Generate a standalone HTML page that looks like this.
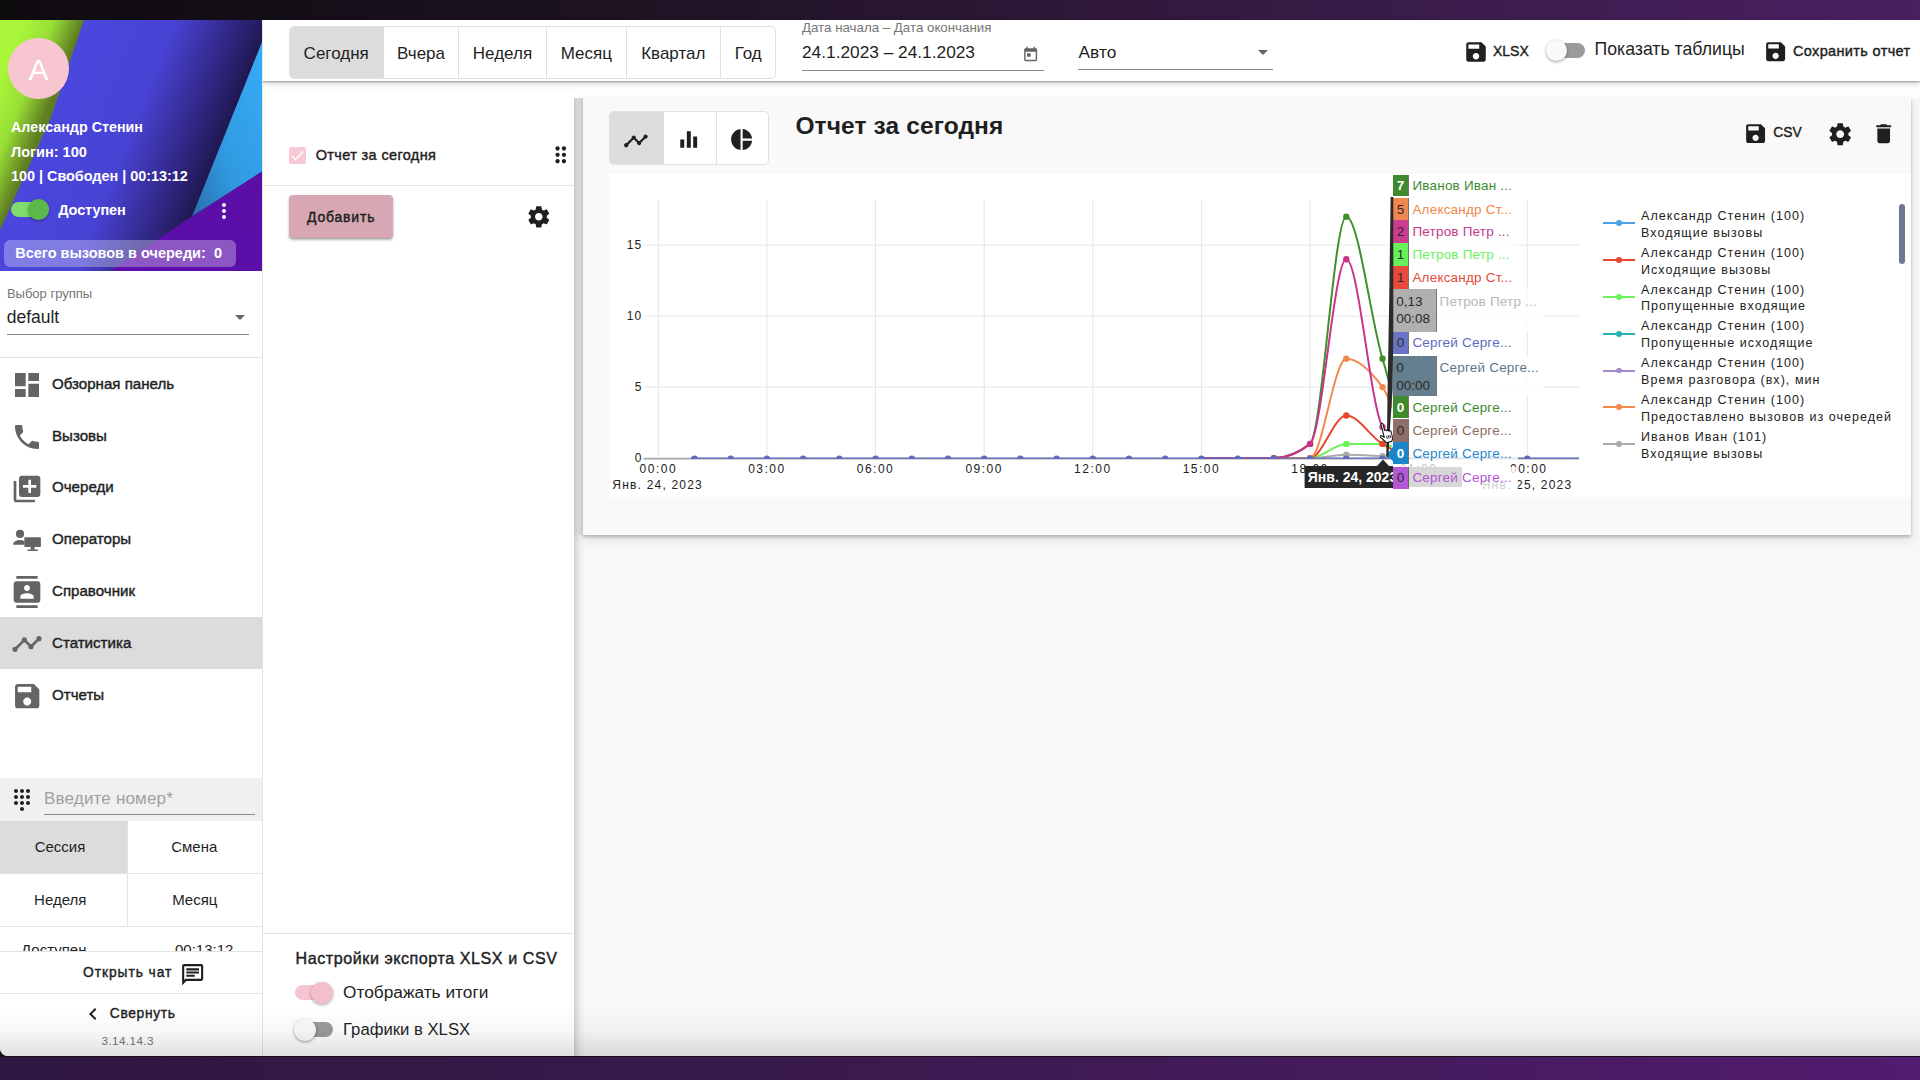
<!DOCTYPE html>
<html><head><meta charset="utf-8">
<style>
*{margin:0;padding:0;box-sizing:border-box}
html,body{width:1920px;height:1080px;overflow:hidden}
body{position:relative;font-family:"Liberation Sans",sans-serif;color:#1f1f1f;background:#1a1020}
.a{position:absolute}
.t{position:absolute;line-height:1;white-space:nowrap}
.b{font-weight:700}
.m{font-weight:400;-webkit-text-stroke:0.42px currentColor}
svg.i{position:absolute;display:block;overflow:visible}
.g{fill:#646464}
.k{fill:#1f1f1f}
.seg{position:absolute;top:0;height:51px;font-size:17px;line-height:51px;text-align:center;color:#1f1f1f}
</style></head><body>
<div class="a" style="left:0;top:0;width:1920px;height:20px;background:linear-gradient(90deg,#0e0b0f 0%,#1c1220 30%,#2e1838 55%,#3e1d50 80%,#4a1f62 100%)"></div>
<div class="a" style="left:0;top:1056px;width:1920px;height:24px;background:linear-gradient(90deg,#2e1740 0%,#391a4c 40%,#461b5e 75%,#521c70 100%)"></div>
<!-- window -->
<div class="a" style="left:0;top:20px;width:1920px;height:1036px;background:#f8f8f8;border-radius:0 0 0 8px;overflow:hidden">
</div>
<!-- MAIN -->
<!--MAINSTART-->
<div class="a" style="left:574px;top:80px;width:1346px;height:18px;background:#fff"></div>
<div class="a" style="left:574px;top:98px;width:11px;height:958px;background:linear-gradient(90deg,rgba(0,0,0,.16),rgba(0,0,0,.05) 50%,rgba(0,0,0,0))"></div>
<div class="a" style="left:583px;top:98px;width:1328px;height:437px;background:#f9f9f9;box-shadow:0 2px 3px rgba(0,0,0,.24),0 5px 12px rgba(0,0,0,.1)"></div>
<div class="a" style="left:574px;top:98px;width:9px;height:437px;background:linear-gradient(90deg,#c9c9c9,#d8d8d8 40%,#d6d6d6 70%,#c6c6c6)"></div>
<div class="a" style="left:609px;top:174px;width:1302px;height:323px;background:#fff"></div>
<div class="a" style="left:609px;top:111px;width:160px;height:54px;border:1px solid #e0e0e0;border-radius:5px;background:#fff;overflow:hidden"><div class="a" style="left:0;top:0;width:53px;height:52px;background:#dcdcdc"></div><div class="a" style="left:53px;top:0;width:1px;height:52px;background:#e0e0e0"></div><div class="a" style="left:105.5px;top:0;width:1px;height:52px;background:#e0e0e0"></div></div>
<svg class="i" style="left:622.9px;top:127.5px" width="25.8" height="25.8" viewBox="0 0 24 24"><path class="k" d="M23 8c0 1.1-.9 2-2 2-.18 0-.35-.02-.51-.07l-3.56 3.55c.05.16.07.34.07.52 0 1.1-.9 2-2 2s-2-.9-2-2c0-.18.02-.36.07-.52l-2.55-2.55c-.16.05-.34.07-.52.07s-.36-.02-.52-.07l-4.55 4.56c.05.16.07.33.07.51 0 1.1-.9 2-2 2s-2-.9-2-2 .9-2 2-2c.18 0 .35.02.51.07l4.56-4.55C8.02 9.36 8 9.18 8 9c0-1.1.9-2 2-2s2 .9 2 2c0 .18-.02.36-.07.52l2.55 2.55c.16-.05.34-.07.52-.07s.36.02.52.07l3.55-3.56C19.02 8.35 19 8.18 19 8c0-1.1.9-2 2-2s2 .9 2 2z"/></svg>
<svg class="i" style="left:676.1px;top:127.3px" width="25" height="25" viewBox="0 0 24 24"><path class="k" d="M10.4 20h3.8V4h-3.8v16zm-6.3 0h3.8v-8H4.1v8zM16.5 9v11h3.8V9h-3.8z"/></svg>
<svg class="i" style="left:729.2px;top:127.1px" width="25.2" height="25.2" viewBox="0 0 24 24"><path class="k" d="M11 2v20c-5.07-.5-9-4.79-9-10s3.93-9.5 9-10zm2.03 0v8.99H22c-.47-4.74-4.24-8.52-8.97-8.99zm0 11.01V22c4.74-.47 8.5-4.25 8.97-8.99h-8.97z"/></svg>
<div class="t b" style="left:795.4px;top:114.3px;font-size:24.5px;letter-spacing:0.12px">Отчет за сегодня</div>
<svg class="i" style="left:1743.25px;top:121.25px" width="25.2" height="25.2" viewBox="0 0 24 24"><path class="k" d="M17 3H5c-1.11 0-2 .9-2 2v14c0 1.1.89 2 2 2h14c1.1 0 2-.9 2-2V7l-4-4zm-5 16c-1.66 0-3-1.34-3-3s1.34-3 3-3 3 1.34 3 3-1.34 3-3 3zm3-10H5V5h10v4z"/></svg>
<div class="t m" style="left:1773.3px;top:126.2px;font-size:13.8px">CSV</div>
<svg class="i" style="left:1827px;top:121px" width="26.4" height="26.4" viewBox="0 0 24 24"><path class="k" d="M19.43 12.98c.04-.32.07-.64.07-.98s-.03-.66-.07-.98l2.11-1.65c.19-.15.24-.42.12-.64l-2-3.46c-.12-.22-.39-.3-.61-.22l-2.49 1c-.52-.4-1.08-.73-1.69-.98l-.38-2.65C14.46 2.18 14.25 2 14 2h-4c-.25 0-.46.18-.49.42l-.38 2.65c-.61.25-1.17.59-1.69.98l-2.49-1c-.23-.09-.49 0-.61.22l-2 3.46c-.13.22-.07.49.12.64l2.11 1.65c-.04.32-.07.65-.07.98s.03.66.07.98l-2.11 1.65c-.19.15-.24.42-.12.64l2 3.46c.12.22.39.3.61.22l2.49-1c.52.4 1.08.73 1.69.98l.38 2.65c.03.24.24.42.49.42h4c.25 0 .46-.18.49-.42l.38-2.65c.61-.25 1.17-.59 1.69-.98l2.49 1c.23.09.49 0 .61-.22l2-3.46c.12-.22.07-.49-.12-.64l-2.11-1.65zM12 15.5c-1.93 0-3.5-1.57-3.5-3.5s1.57-3.5 3.5-3.5 3.5 1.57 3.5 3.5-1.57 3.5-3.5 3.5z"/></svg>
<svg class="i" style="left:1870.8px;top:121.2px" width="25.4" height="25.4" viewBox="0 0 24 24"><path class="k" d="M6 19c0 1.1.9 2 2 2h8c1.1 0 2-.9 2-2V7H6v12zM19 4h-3.5l-1-1h-5l-1 1H5v2h14V4z"/></svg>
<svg class="a" style="left:583px;top:98px" width="1328" height="437" viewBox="583 98 1328 437">
<defs><clipPath id="pc"><rect x="643" y="190" width="936" height="268.8"/></clipPath><clipPath id="pc2"><rect x="643" y="190" width="749" height="268.8"/></clipPath></defs>
<g stroke="#e6e6e6" stroke-width="1"><line x1="658.3" y1="200" x2="658.3" y2="458.6"/><line x1="766.9" y1="200" x2="766.9" y2="458.6"/><line x1="875.5" y1="200" x2="875.5" y2="458.6"/><line x1="984.2" y1="200" x2="984.2" y2="458.6"/><line x1="1092.8" y1="200" x2="1092.8" y2="458.6"/><line x1="1201.4" y1="200" x2="1201.4" y2="458.6"/><line x1="1310.0" y1="200" x2="1310.0" y2="458.6"/><line x1="1418.6" y1="200" x2="1418.6" y2="458.6"/><line x1="1527.3" y1="200" x2="1527.3" y2="458.6"/><line x1="643.5" y1="387.1" x2="1579" y2="387.1"/><line x1="643.5" y1="316.1" x2="1579" y2="316.1"/><line x1="643.5" y1="245.1" x2="1579" y2="245.1"/></g>
<line x1="643.5" y1="458.6" x2="1579" y2="458.6" stroke="#a6a6a6" stroke-width="1.6"/>
<g clip-path="url(#pc2)"><path d="M1237.7,458.1 C1249.7,458.1 1261.8,458.1 1273.9,458.1 C1285.9,458.1 1298.0,458.1 1310.1,458.1 C1322.1,458.1 1334.2,454.8 1346.3,454.8 C1358.4,454.8 1370.4,455.7 1382.5,456.3 C1394.6,456.8 1406.6,458.1 1418.7,458.1 C1430.8,458.1 1442.9,458.1 1454.9,458.1" fill="none" stroke="#aaaaaa" stroke-width="2"/><circle cx="1310.1" cy="458.1" r="3.2" fill="#aaaaaa"/><circle cx="1346.3" cy="454.8" r="3.2" fill="#aaaaaa"/><circle cx="1382.5" cy="456.3" r="3.2" fill="#aaaaaa"/><circle cx="1418.7" cy="458.1" r="3.2" fill="#aaaaaa"/><path d="M1237.7,458.1 C1249.7,458.1 1261.8,458.1 1273.9,458.1 C1285.9,458.1 1298.0,458.1 1310.1,458.1 C1322.1,458.1 1334.2,443.9 1346.3,443.9 C1358.4,443.9 1370.4,443.9 1382.5,443.9 C1394.6,443.9 1406.6,458.1 1418.7,458.1 C1430.8,458.1 1442.9,458.1 1454.9,458.1" fill="none" stroke="#6cf35a" stroke-width="2"/><circle cx="1310.1" cy="458.1" r="3.2" fill="#6cf35a"/><circle cx="1346.3" cy="443.9" r="3.2" fill="#6cf35a"/><circle cx="1382.5" cy="443.9" r="3.2" fill="#6cf35a"/><circle cx="1418.7" cy="458.1" r="3.2" fill="#6cf35a"/><path d="M1237.7,458.1 C1249.7,458.1 1261.8,458.1 1273.9,458.1 C1285.9,458.1 1298.0,458.1 1310.1,458.1 C1322.1,458.1 1334.2,415.5 1346.3,415.5 C1358.4,415.5 1370.4,436.8 1382.5,443.9 C1394.6,451.0 1406.6,458.1 1418.7,458.1 C1430.8,458.1 1442.9,458.1 1454.9,458.1" fill="none" stroke="#e8472e" stroke-width="2"/><circle cx="1310.1" cy="458.1" r="3.2" fill="#e8472e"/><circle cx="1346.3" cy="415.5" r="3.2" fill="#e8472e"/><circle cx="1382.5" cy="443.9" r="3.2" fill="#e8472e"/><circle cx="1418.7" cy="458.1" r="3.2" fill="#e8472e"/><path d="M1237.7,458.1 C1249.7,458.1 1261.8,458.1 1273.9,458.1 C1285.9,458.1 1298.0,458.1 1310.1,458.1 C1322.1,458.1 1334.2,358.7 1346.3,358.7 C1358.4,358.7 1370.4,370.5 1382.5,387.1 C1394.6,403.7 1406.6,458.1 1418.7,458.1 C1430.8,458.1 1442.9,458.1 1454.9,458.1" fill="none" stroke="#f28a4e" stroke-width="2"/><circle cx="1310.1" cy="458.1" r="3.2" fill="#f28a4e"/><circle cx="1346.3" cy="358.7" r="3.2" fill="#f28a4e"/><circle cx="1382.5" cy="387.1" r="3.2" fill="#f28a4e"/><circle cx="1418.7" cy="458.1" r="3.2" fill="#f28a4e"/><path d="M1201.4,458.1 C1213.5,458.1 1225.6,458.1 1237.7,458.1 C1249.7,458.1 1261.8,458.1 1273.9,458.1 C1285.9,458.1 1298.0,453.4 1310.1,443.9 C1322.1,434.4 1334.2,216.7 1346.3,216.7 C1358.4,216.7 1370.4,318.5 1382.5,358.7 C1394.6,398.9 1406.6,458.1 1418.7,458.1 C1430.8,458.1 1442.9,458.1 1454.9,458.1" fill="none" stroke="#3f8f2a" stroke-width="2"/><circle cx="1273.9" cy="458.1" r="3.2" fill="#3f8f2a"/><circle cx="1310.1" cy="443.9" r="3.2" fill="#3f8f2a"/><circle cx="1346.3" cy="216.7" r="3.2" fill="#3f8f2a"/><circle cx="1382.5" cy="358.7" r="3.2" fill="#3f8f2a"/><circle cx="1418.7" cy="458.1" r="3.2" fill="#3f8f2a"/><path d="M1201.4,458.1 C1213.5,458.1 1225.6,458.1 1237.7,458.1 C1249.7,458.1 1261.8,458.1 1273.9,458.1 C1285.9,458.1 1298.0,453.4 1310.1,443.9 C1322.1,434.4 1334.2,259.3 1346.3,259.3 C1358.4,259.3 1370.4,406.0 1382.5,426.9 C1394.6,447.7 1406.6,458.1 1418.7,458.1 C1430.8,458.1 1442.9,458.1 1454.9,458.1" fill="none" stroke="#c9348a" stroke-width="2"/><circle cx="1273.9" cy="458.1" r="3.2" fill="#c9348a"/><circle cx="1310.1" cy="443.9" r="3.2" fill="#c9348a"/><circle cx="1346.3" cy="259.3" r="3.2" fill="#c9348a"/><circle cx="1382.5" cy="426.9" r="3.2" fill="#c9348a"/><circle cx="1418.7" cy="458.1" r="3.2" fill="#c9348a"/></g>
<g clip-path="url(#pc)"><line x1="691" y1="458.6" x2="1579" y2="458.6" stroke="#5c6bc0" stroke-width="2"/><circle cx="694.5" cy="458.6" r="3.2" fill="#5c6bc0"/><circle cx="730.7" cy="458.6" r="3.2" fill="#5c6bc0"/><circle cx="766.9" cy="458.6" r="3.2" fill="#5c6bc0"/><circle cx="803.1" cy="458.6" r="3.2" fill="#5c6bc0"/><circle cx="839.3" cy="458.6" r="3.2" fill="#5c6bc0"/><circle cx="875.6" cy="458.6" r="3.2" fill="#5c6bc0"/><circle cx="911.8" cy="458.6" r="3.2" fill="#5c6bc0"/><circle cx="948.0" cy="458.6" r="3.2" fill="#5c6bc0"/><circle cx="984.2" cy="458.6" r="3.2" fill="#5c6bc0"/><circle cx="1020.4" cy="458.6" r="3.2" fill="#5c6bc0"/><circle cx="1056.6" cy="458.6" r="3.2" fill="#5c6bc0"/><circle cx="1092.8" cy="458.6" r="3.2" fill="#5c6bc0"/><circle cx="1129.0" cy="458.6" r="3.2" fill="#5c6bc0"/><circle cx="1165.2" cy="458.6" r="3.2" fill="#5c6bc0"/><circle cx="1201.4" cy="458.6" r="3.2" fill="#5c6bc0"/><circle cx="1237.7" cy="458.6" r="3.2" fill="#5c6bc0"/><circle cx="1273.9" cy="458.6" r="3.2" fill="#5c6bc0"/><circle cx="1310.1" cy="458.6" r="3.2" fill="#5c6bc0"/><circle cx="1346.3" cy="458.6" r="3.2" fill="#5c6bc0"/><circle cx="1382.5" cy="458.6" r="3.2" fill="#5c6bc0"/><circle cx="1418.7" cy="458.6" r="3.2" fill="#5c6bc0"/><circle cx="1454.9" cy="458.6" r="3.2" fill="#5c6bc0"/><circle cx="1491.1" cy="458.6" r="3.2" fill="#5c6bc0"/><circle cx="1527.3" cy="458.6" r="3.2" fill="#5c6bc0"/></g>
</svg>
<div class="t" style="left:560px;width:82.5px;text-align:right;top:238.8px;font-size:12px;letter-spacing:1.2px;color:#222">15</div>
<div class="t" style="left:560px;width:82.5px;text-align:right;top:309.8px;font-size:12px;letter-spacing:1.2px;color:#222">10</div>
<div class="t" style="left:560px;width:82.5px;text-align:right;top:380.8px;font-size:12px;letter-spacing:1.2px;color:#222">5</div>
<div class="t" style="left:560px;width:82.5px;text-align:right;top:451.8px;font-size:12px;letter-spacing:1.2px;color:#222">0</div>
<div class="t" style="left:618.3px;width:80px;text-align:center;top:462.5px;font-size:12px;letter-spacing:1.2px;color:#222;letter-spacing:1.5px">00:00</div>
<div class="t" style="left:726.9px;width:80px;text-align:center;top:462.5px;font-size:12px;letter-spacing:1.2px;color:#222;letter-spacing:1.5px">03:00</div>
<div class="t" style="left:835.5px;width:80px;text-align:center;top:462.5px;font-size:12px;letter-spacing:1.2px;color:#222;letter-spacing:1.5px">06:00</div>
<div class="t" style="left:944.2px;width:80px;text-align:center;top:462.5px;font-size:12px;letter-spacing:1.2px;color:#222;letter-spacing:1.5px">09:00</div>
<div class="t" style="left:1052.8px;width:80px;text-align:center;top:462.5px;font-size:12px;letter-spacing:1.2px;color:#222;letter-spacing:1.5px">12:00</div>
<div class="t" style="left:1161.4px;width:80px;text-align:center;top:462.5px;font-size:12px;letter-spacing:1.2px;color:#222;letter-spacing:1.5px">15:00</div>
<div class="t" style="left:1270.0px;width:80px;text-align:center;top:462.5px;font-size:12px;letter-spacing:1.2px;color:#222;letter-spacing:1.5px">18:00</div>
<div class="t" style="left:1378.6px;width:80px;text-align:center;top:462.5px;font-size:12px;letter-spacing:1.2px;color:#222;letter-spacing:1.5px;color:#c8c8c8">21:00</div>
<div class="t" style="left:612.3px;top:479.3px;font-size:12px;letter-spacing:1.2px;color:#222">Янв. 24, 2023</div>
<div class="t" style="left:1510px;top:462.5px;font-size:12px;letter-spacing:1.2px;color:#222;letter-spacing:1.5px">00:00</div>
<div class="t" style="left:1481.7px;top:479.3px;font-size:12px;letter-spacing:1.2px;color:#222">Янв. 25, 2023</div>
<div class="a" style="left:1602.8px;top:222.3px;width:32.4px;height:2px;background:#4aa3e8"></div>
<div class="a" style="left:1616.2px;top:220.4px;width:5.8px;height:5.8px;border-radius:50%;background:#4aa3e8"></div>
<div class="t" style="left:1641px;top:209.9px;font-size:12.5px;letter-spacing:1.05px;color:#222">Александр Стенин (100)</div>
<div class="t" style="left:1641px;top:226.8px;font-size:12.5px;letter-spacing:1.05px;color:#222">Входящие вызовы</div>
<div class="a" style="left:1602.8px;top:259.1px;width:32.4px;height:2px;background:#e8472e"></div>
<div class="a" style="left:1616.2px;top:257.2px;width:5.8px;height:5.8px;border-radius:50%;background:#e8472e"></div>
<div class="t" style="left:1641px;top:246.7px;font-size:12.5px;letter-spacing:1.05px;color:#222">Александр Стенин (100)</div>
<div class="t" style="left:1641px;top:263.6px;font-size:12.5px;letter-spacing:1.05px;color:#222">Исходящие вызовы</div>
<div class="a" style="left:1602.8px;top:295.9px;width:32.4px;height:2px;background:#6cf35a"></div>
<div class="a" style="left:1616.2px;top:294.0px;width:5.8px;height:5.8px;border-radius:50%;background:#6cf35a"></div>
<div class="t" style="left:1641px;top:283.5px;font-size:12.5px;letter-spacing:1.05px;color:#222">Александр Стенин (100)</div>
<div class="t" style="left:1641px;top:300.4px;font-size:12.5px;letter-spacing:1.05px;color:#222">Пропущенные входящие</div>
<div class="a" style="left:1602.8px;top:332.7px;width:32.4px;height:2px;background:#26b0b0"></div>
<div class="a" style="left:1616.2px;top:330.8px;width:5.8px;height:5.8px;border-radius:50%;background:#26b0b0"></div>
<div class="t" style="left:1641px;top:320.3px;font-size:12.5px;letter-spacing:1.05px;color:#222">Александр Стенин (100)</div>
<div class="t" style="left:1641px;top:337.2px;font-size:12.5px;letter-spacing:1.05px;color:#222">Пропущенные исходящие</div>
<div class="a" style="left:1602.8px;top:369.5px;width:32.4px;height:2px;background:#a48ccc"></div>
<div class="a" style="left:1616.2px;top:367.6px;width:5.8px;height:5.8px;border-radius:50%;background:#a48ccc"></div>
<div class="t" style="left:1641px;top:357.1px;font-size:12.5px;letter-spacing:1.05px;color:#222">Александр Стенин (100)</div>
<div class="t" style="left:1641px;top:374.0px;font-size:12.5px;letter-spacing:1.05px;color:#222">Время разговора (вх), мин</div>
<div class="a" style="left:1602.8px;top:406.3px;width:32.4px;height:2px;background:#f28a4e"></div>
<div class="a" style="left:1616.2px;top:404.4px;width:5.8px;height:5.8px;border-radius:50%;background:#f28a4e"></div>
<div class="t" style="left:1641px;top:393.9px;font-size:12.5px;letter-spacing:1.05px;color:#222">Александр Стенин (100)</div>
<div class="t" style="left:1641px;top:410.8px;font-size:12.5px;letter-spacing:1.05px;color:#222">Предоставлено вызовов из очередей</div>
<div class="a" style="left:1602.8px;top:443.1px;width:32.4px;height:2px;background:#aaaaaa"></div>
<div class="a" style="left:1616.2px;top:441.2px;width:5.8px;height:5.8px;border-radius:50%;background:#aaaaaa"></div>
<div class="t" style="left:1641px;top:430.7px;font-size:12.5px;letter-spacing:1.05px;color:#222">Иванов Иван (101)</div>
<div class="t" style="left:1641px;top:447.6px;font-size:12.5px;letter-spacing:1.05px;color:#222">Входящие вызовы</div>
<div class="a" style="left:1899px;top:204.4px;width:6.2px;height:59.3px;border-radius:3px;background:#6e7890"></div>
<div class="a" style="left:1393px;top:175px;width:125px;height:20.5px;background:rgba(255,255,255,.78)"></div>
<div class="a" style="left:1393px;top:198px;width:125px;height:22px;background:rgba(255,255,255,.78)"></div>
<div class="a" style="left:1393px;top:220px;width:125px;height:23px;background:rgba(255,255,255,.78)"></div>
<div class="a" style="left:1393px;top:243px;width:125px;height:23px;background:rgba(255,255,255,.78)"></div>
<div class="a" style="left:1393px;top:266px;width:125px;height:23px;background:rgba(255,255,255,.78)"></div>
<div class="a" style="left:1393px;top:289px;width:151px;height:42.5px;background:rgba(255,255,255,.78)"></div>
<div class="a" style="left:1393px;top:331.5px;width:125px;height:22.7px;background:rgba(255,255,255,.78)"></div>
<div class="a" style="left:1393px;top:355.8px;width:151px;height:40.5px;background:rgba(255,255,255,.78)"></div>
<div class="a" style="left:1393px;top:396.3px;width:125px;height:21.8px;background:rgba(255,255,255,.78)"></div>
<div class="a" style="left:1393px;top:418.5px;width:125px;height:23.9px;background:rgba(255,255,255,.78)"></div>
<div class="a" style="left:1393px;top:442.4px;width:125px;height:21.9px;background:rgba(255,255,255,.78)"></div>
<div class="a" style="left:1393px;top:466.7px;width:125px;height:21.9px;background:rgba(255,255,255,.78)"></div>
<div class="a" style="left:1408px;top:466.7px;width:54px;height:20.5px;background:rgba(200,200,200,.72)"></div>
<div class="a" style="left:1393px;top:175px;width:15px;height:20.5px;background:#3f8a2c;box-shadow:1px 0 0 rgba(0,0,0,.55)"></div>
<div class="t" style="left:1393px;width:15px;text-align:center;top:178.7px;font-size:13.5px;font-weight:700;color:#fff">7</div>
<div class="t" style="left:1412.4px;top:178.7px;font-size:13.5px;letter-spacing:0.2px;color:#3d8a2e">Иванов Иван ...</div>
<div class="a" style="left:1393px;top:198px;width:15px;height:22px;background:#f0884f;box-shadow:1px 0 0 rgba(0,0,0,.55)"></div>
<div class="t" style="left:1393px;width:15px;text-align:center;top:202.5px;font-size:13.5px;color:#2a2a2a">5</div>
<div class="t" style="left:1412.4px;top:202.5px;font-size:13.5px;letter-spacing:0.2px;color:#f0864a">Александр Ст...</div>
<div class="a" style="left:1393px;top:220px;width:15px;height:23px;background:#cc3d8f;box-shadow:1px 0 0 rgba(0,0,0,.55)"></div>
<div class="t" style="left:1393px;width:15px;text-align:center;top:225.0px;font-size:13.5px;color:#2a2a2a">2</div>
<div class="t" style="left:1412.4px;top:225.0px;font-size:13.5px;letter-spacing:0.2px;color:#c5398b">Петров Петр ...</div>
<div class="a" style="left:1393px;top:243px;width:15px;height:23px;background:#66f256;box-shadow:1px 0 0 rgba(0,0,0,.55)"></div>
<div class="t" style="left:1393px;width:15px;text-align:center;top:248.0px;font-size:13.5px;color:#2a2a2a">1</div>
<div class="t" style="left:1412.4px;top:248.0px;font-size:13.5px;letter-spacing:0.2px;color:#6cf25c">Петров Петр ...</div>
<div class="a" style="left:1393px;top:266px;width:15px;height:23px;background:#e84b3c;box-shadow:1px 0 0 rgba(0,0,0,.55)"></div>
<div class="t" style="left:1393px;width:15px;text-align:center;top:271.0px;font-size:13.5px;color:#2a2a2a">1</div>
<div class="t" style="left:1412.4px;top:271.0px;font-size:13.5px;letter-spacing:0.2px;color:#e44a36">Александр Ст...</div>
<div class="a" style="left:1393px;top:289px;width:43px;height:42.5px;background:#b0b0b0;box-shadow:1px 0 0 rgba(0,0,0,.55)"></div>
<div class="t" style="left:1396.3px;top:294.5px;font-size:13.5px;color:#2a2a2a">0,13</div>
<div class="t" style="left:1396.3px;top:312.1px;font-size:13.5px;color:#2a2a2a">00:08</div>
<div class="t" style="left:1439.6px;top:294.5px;font-size:13.5px;letter-spacing:0.2px;color:#b8b8b8">Петров Петр ...</div>
<div class="a" style="left:1393px;top:331.5px;width:15px;height:22.7px;background:#6b74c4;box-shadow:1px 0 0 rgba(0,0,0,.55)"></div>
<div class="t" style="left:1393px;width:15px;text-align:center;top:336.3px;font-size:13.5px;color:#2a2a2a">0</div>
<div class="t" style="left:1412.4px;top:336.3px;font-size:13.5px;letter-spacing:0.2px;color:#5e6ac0">Сергей Серге...</div>
<div class="a" style="left:1393px;top:355.8px;width:43px;height:40.5px;background:#667f8e;box-shadow:1px 0 0 rgba(0,0,0,.55)"></div>
<div class="t" style="left:1396.3px;top:361.3px;font-size:13.5px;color:#2a2a2a">0</div>
<div class="t" style="left:1396.3px;top:378.9px;font-size:13.5px;color:#2a2a2a">00:00</div>
<div class="t" style="left:1439.6px;top:361.3px;font-size:13.5px;letter-spacing:0.2px;color:#5f7686">Сергей Серге...</div>
<div class="a" style="left:1393px;top:396.3px;width:15px;height:21.8px;background:#3f8a2c;box-shadow:1px 0 0 rgba(0,0,0,.55)"></div>
<div class="t" style="left:1393px;width:15px;text-align:center;top:400.7px;font-size:13.5px;font-weight:700;color:#fff">0</div>
<div class="t" style="left:1412.4px;top:400.7px;font-size:13.5px;letter-spacing:0.2px;color:#3d8a2e">Сергей Серге...</div>
<div class="a" style="left:1393px;top:418.5px;width:15px;height:23.9px;background:#8e7068;box-shadow:1px 0 0 rgba(0,0,0,.55)"></div>
<div class="t" style="left:1393px;width:15px;text-align:center;top:423.9px;font-size:13.5px;color:#2a2a2a">0</div>
<div class="t" style="left:1412.4px;top:423.9px;font-size:13.5px;letter-spacing:0.2px;color:#8d6e63">Сергей Серге...</div>
<div class="a" style="left:1393px;top:442.4px;width:15px;height:21.9px;background:#1a86c7;box-shadow:1px 0 0 rgba(0,0,0,.55)"></div>
<div class="t" style="left:1393px;width:15px;text-align:center;top:446.8px;font-size:13.5px;font-weight:700;color:#fff">0</div>
<div class="t" style="left:1412.4px;top:446.8px;font-size:13.5px;letter-spacing:0.2px;color:#1e88cc">Сергей Серге...</div>
<div class="a" style="left:1393px;top:466.7px;width:15px;height:21.9px;background:#b357d4;box-shadow:1px 0 0 rgba(0,0,0,.55)"></div>
<div class="t" style="left:1393px;width:15px;text-align:center;top:471.1px;font-size:13.5px;color:#2a2a2a">0</div>
<div class="t" style="left:1412.4px;top:471.1px;font-size:13.5px;letter-spacing:0.2px;color:#b455d6">Сергей Серге...</div>
<svg class="a" style="left:1380px;top:440px" width="20" height="30" viewBox="1380 440 20 30"><polygon points="1393.5,446 1386.8,454.6 1393.5,462" fill="#1a86c7"/></svg>
<svg class="a" style="left:1380px;top:170px" width="20" height="300" viewBox="1380 170 20 300"><polygon points="1390.6,197 1393.3,197 1393.3,330 1392.6,390 1390.2,425 1388.3,458 1386.2,456 1387.2,420 1387.6,390 1389.2,300" fill="#2b2b2b"/></svg>
<svg class="a" style="left:1300px;top:455px" width="100" height="40" viewBox="1300 455 100 40"><polygon points="1377,466 1383,459.5 1389,466" fill="#262626"/><rect x="1304.6" y="466" width="88.4" height="22" fill="#262626"/></svg>
<div class="a" style="left:1304.6px;top:466px;width:88.4px;height:22px;overflow:hidden"><div class="t b" style="left:3.2px;top:3.8px;font-size:14px;color:#fff">Янв. 24, 2023</div></div>
<svg class="a" style="left:1376.3px;top:417.7px" width="24" height="30" viewBox="0 0 24 30"><g transform="translate(12 15) rotate(-14) scale(0.85) translate(-12 -15)"><path d="M6.5 3.2c0-1.3 2.3-1.3 2.3 0v8.3c.3-1 2.3-1 2.4.2v.8c.3-1 2.3-1 2.4.2v.9c.4-.9 2.2-.8 2.300.3v6.3c0 2.4-1.1 4.2-1.8 5.3H7.3C6 22.8 3.6 20 2.3 17.8c-.8-1.4.7-2.3 1.6-1.4l2.6 2.4z" fill="#fff" stroke="#111" stroke-width="1.2"/><path d="M9.6 17.8v3.6M11.6 17.8v3.6M13.6 17.8v3.6" stroke="#111" stroke-width="1"/></g></svg>
<!--MAINEND-->
<!-- LEFT PANEL -->
<!--LPSTART-->
<div class="a" style="left:262px;top:80px;width:312px;height:976px;background:#fff"></div>
<div class="a" style="left:289.4px;top:147.3px;width:17px;height:17px;border-radius:2px;background:#f7c9d4"></div>
<svg class="i" style="left:289.4px;top:147.3px" width="17" height="17" viewBox="0 0 24 24"><path fill="#fff" d="M9 16.17L4.83 12l-1.42 1.41L9 19 21 7l-1.41-1.41z"/></svg>
<div class="t m" style="left:315.7px;top:147.7px;font-size:14.5px;letter-spacing:0.36px">Отчет за сегодня</div>
<svg class="i" style="left:547.6px;top:141.7px" width="25.5" height="25.5" viewBox="0 0 24 24"><path class="k" d="M11 18c0 1.1-.9 2-2 2s-2-.9-2-2 .9-2 2-2 2 .9 2 2zm-2-8c-1.1 0-2 .9-2 2s.9 2 2 2 2-.9 2-2-.9-2-2-2zm0-6c-1.1 0-2 .9-2 2s.9 2 2 2 2-.9 2-2-.9-2-2-2zm6 4c1.1 0 2-.9 2-2s-.9-2-2-2-2 .9-2 2 .9 2 2 2zm0 2c-1.1 0-2 .9-2 2s.9 2 2 2 2-.9 2-2-.9-2-2-2zm0 6c-1.1 0-2 .9-2 2s.9 2 2 2 2-.9 2-2-.9-2-2-2z"/></svg>
<div class="a" style="left:262px;top:185px;width:312px;height:1px;background:#e2e2e2"></div>
<div class="a" style="left:289.4px;top:194.8px;width:103.6px;height:43px;border-radius:4px;background:#d7a8b4;box-shadow:0 2px 3px rgba(0,0,0,.28),0 1px 1px rgba(0,0,0,.12)"></div>
<div class="t m" style="left:307px;top:209.9px;font-size:14px;letter-spacing:0.8px">Добавить</div>
<svg class="i" style="left:525.8px;top:203.9px" width="25.6" height="25.6" viewBox="0 0 24 24"><path class="k" d="M19.43 12.98c.04-.32.07-.64.07-.98s-.03-.66-.07-.98l2.11-1.65c.19-.15.24-.42.12-.64l-2-3.46c-.12-.22-.39-.3-.61-.22l-2.49 1c-.52-.4-1.08-.73-1.69-.98l-.38-2.65C14.46 2.18 14.25 2 14 2h-4c-.25 0-.46.18-.49.42l-.38 2.65c-.61.25-1.170.59-1.69.98l-2.49-1c-.23-.09-.49 0-.61.22l-2 3.46c-.13.22-.07.49.12.64l2.11 1.65c-.04.32-.07.65-.07.98s.03.66.07.98l-2.11 1.65c-.19.15-.24.42-.12.64l2 3.46c.12.22.39.3.61.22l2.49-1c.52.4 1.08.73 1.69.98l.38 2.65c.03.24.24.42.49.42h4c.25 0 .46-.18.49-.42l.38-2.65c.61-.25 1.17-.59 1.69-.98l2.49 1c.23.09.49 0 .61-.22l2-3.46c.12-.22.07-.49-.12-.64l-2.11-1.65zM12 15.5c-1.93 0-3.5-1.57-3.5-3.5s1.57-3.5 3.5-3.5 3.5 1.57 3.5 3.5-1.57 3.5-3.5 3.5z"/></svg>
<div class="a" style="left:262px;top:933px;width:312px;height:1px;background:#e2e2e2"></div>
<div class="t m" style="left:295.6px;top:950.2px;font-size:16.1px;letter-spacing:0.55px">Настройки экспорта XLSX и CSV</div>
<div class="a" style="left:295px;top:985px;width:38px;height:15px;border-radius:8px;background:#f6c3d0"></div>
<div class="a" style="left:311.2px;top:981.5px;width:22px;height:22px;border-radius:50%;background:#f4bfcc;box-shadow:0 1px 3px rgba(0,0,0,.35)"></div>
<div class="t" style="left:343px;top:984.4px;font-size:17.3px">Отображать итоги</div>
<div class="a" style="left:295px;top:1022px;width:38px;height:15px;border-radius:8px;background:#9b9b9b"></div>
<div class="a" style="left:294px;top:1018.5px;width:22px;height:22px;border-radius:50%;background:#fafafa;box-shadow:0 1px 3px rgba(0,0,0,.4)"></div>
<div class="t" style="left:343px;top:1021.9px;font-size:16.7px">Графики в XLSX</div>
<!--LPEND-->
<!-- TOOLBAR -->
<!--TOOLSTART-->
<div class="a" style="left:262px;top:20px;width:1658px;height:60.5px;background:#fff;box-shadow:0 1px 2px rgba(0,0,0,.35),0 3px 7px rgba(0,0,0,.14)"></div>
<div class="a" style="left:289px;top:26px;width:487px;height:53px;border:1px solid #e0e0e0;border-radius:5px;overflow:hidden"><div class="a" style="left:0;top:0;width:94px;height:51px;background:#dcdcdc"></div></div>
<div class="a" style="left:383.0px;top:27px;width:1px;height:51px;background:#e0e0e0"></div>
<div class="a" style="left:458.0px;top:27px;width:1px;height:51px;background:#e0e0e0"></div>
<div class="a" style="left:546.0px;top:27px;width:1px;height:51px;background:#e0e0e0"></div>
<div class="a" style="left:625.7px;top:27px;width:1px;height:51px;background:#e0e0e0"></div>
<div class="a" style="left:719.9px;top:27px;width:1px;height:51px;background:#e0e0e0"></div>
<div class="t" style="left:286.2px;width:100px;text-align:center;top:45.2px;font-size:17px">Сегодня</div>
<div class="t" style="left:371.0px;width:100px;text-align:center;top:45.2px;font-size:17px">Вчера</div>
<div class="t" style="left:452.5px;width:100px;text-align:center;top:45.2px;font-size:17px">Неделя</div>
<div class="t" style="left:536.4px;width:100px;text-align:center;top:45.2px;font-size:17px">Месяц</div>
<div class="t" style="left:623.3px;width:100px;text-align:center;top:45.2px;font-size:17px">Квартал</div>
<div class="t" style="left:698.2px;width:100px;text-align:center;top:45.2px;font-size:17px">Год</div>
<div class="t" style="left:802px;top:20.7px;font-size:13.3px;color:#767676">Дата начала – Дата окончания</div>
<div class="t" style="left:802px;top:44.2px;font-size:17.3px;color:#1f1f1f">24.1.2023 – 24.1.2023</div>
<div class="a" style="left:802px;top:70px;width:242px;height:1px;background:#8a8a8a"></div>
<svg class="i" style="left:1021.8px;top:46.3px" width="17.3" height="17.3" viewBox="0 0 24 24"><path fill="#646464" d="M19 3h-1V1h-2v2H8V1H6v2H5c-1.11 0-1.99.9-1.99 2L3 19c0 1.1.89 2 2 2h14c1.1 0 2-.9 2-2V5c0-1.1-.9-2-2-2zm0 16H5V8h14v11zM7 10h5v5H7z"/></svg>
<div class="t" style="left:1078.6px;top:43.6px;font-size:17.3px;color:#1f1f1f">Авто</div>
<div class="a" style="left:1078px;top:68.6px;width:194.6px;height:1px;background:#8a8a8a"></div>
<svg class="i" style="left:1251px;top:39.5px" width="24" height="24" viewBox="0 0 24 24"><path fill="#666" d="M7 10l5 5 5-5z"/></svg>
<svg class="i" style="left:1462.75px;top:38.95px" width="26" height="26" viewBox="0 0 24 24"><path class="k" d="M17 3H5c-1.11 0-2 .9-2 2v14c0 1.1.89 2 2 2h14c1.1 0 2-.9 2-2V7l-4-4zm-5 16c-1.66 0-3-1.34-3-3s1.34-3 3-3 3 1.34 3 3-1.34 3-3 3zm3-10H5V5h10v4z"/></svg>
<div class="t m" style="left:1493px;top:44.0px;font-size:14px;color:#1f1f1f">XLSX</div>
<div class="a" style="left:1547px;top:43px;width:38px;height:15px;border-radius:8px;background:#9b9b9b"></div>
<div class="a" style="left:1545.6px;top:39.6px;width:21.5px;height:21.5px;border-radius:50%;background:#fafafa;box-shadow:0 1px 3px rgba(0,0,0,.4)"></div>
<div class="t" style="left:1594.5px;top:41.3px;font-size:17.7px;color:#1f1f1f">Показать таблицы</div>
<svg class="i" style="left:1762.8px;top:38.6px" width="25.3" height="25.3" viewBox="0 0 24 24"><path class="k" d="M17 3H5c-1.11 0-2 .9-2 2v14c0 1.1.89 2 2 2h14c1.1 0 2-.9 2-2V7l-4-4zm-5 16c-1.66 0-3-1.34-3-3s1.34-3 3-3 3 1.34 3 3-1.34 3-3 3zm3-10H5V5h10v4z"/></svg>
<div class="t m" style="left:1793px;top:43.7px;font-size:14.5px;letter-spacing:0.35px;color:#1f1f1f">Сохранить отчет</div>
<!--TOOLEND-->
<!-- SIDEBAR -->
<!--SIDESTART-->
<div class="a" style="left:0;top:20px;width:263px;height:1036px;background:#fff;border-right:1px solid #e4e4e4;border-bottom-left-radius:8px"></div>
<svg class="a" style="left:0;top:20px" width="262" height="251" viewBox="0 0 262 251">
 <defs>
  <linearGradient id="gb" gradientUnits="userSpaceOnUse" x1="40" y1="100" x2="204.5" y2="165.8">
   <stop offset="0" stop-color="#4b47de"/><stop offset="0.5" stop-color="#4843d4"/><stop offset="0.8" stop-color="#322888"/><stop offset="1" stop-color="#1f1850"/>
  </linearGradient>
  <linearGradient id="gg" gradientUnits="userSpaceOnUse" x1="0" y1="60" x2="51.4" y2="80.8">
   <stop offset="0" stop-color="#a9f63b"/><stop offset="0.5" stop-color="#98de35"/><stop offset="1" stop-color="#5f7d22"/>
  </linearGradient>
  <linearGradient id="gl" x1="1" y1="0" x2="0" y2="1">
   <stop offset="0" stop-color="#36acf8"/><stop offset="0.6" stop-color="#309ae0"/><stop offset="1" stop-color="#2a6cae"/>
  </linearGradient>
  <linearGradient id="gp" x1="0" y1="1" x2="1" y2="0">
   <stop offset="0" stop-color="#5c10aa"/><stop offset="1" stop-color="#5a0ea6"/>
  </linearGradient>
 </defs>
 <rect width="262" height="251" fill="url(#gb)"/>
 <polygon points="0,0 84,0 50,100 33.3,136.7 0,210" fill="url(#gg)"/>
 <polygon points="262,22 262,151.6 192,196.5" fill="url(#gl)"/>
 <polygon points="262,151.6 192,196.5 110,251 262,251" fill="url(#gp)"/>
</svg>
<div class="a" style="left:8px;top:38px;width:61px;height:61px;border-radius:50%;background:#f7c6d1"></div>
<div class="t" style="left:8px;top:55.4px;width:61px;text-align:center;font-size:30px;color:#fff">A</div>
<div class="t b" style="left:11px;top:119.9px;font-size:14.3px;color:#fff">Александр Стенин</div>
<div class="t b" style="left:11px;top:144.7px;font-size:14.5px;color:#fff">Логин: 100</div>
<div class="t b" style="left:11px;top:168.5px;font-size:14.4px;color:#fff">100 | Свободен | 00:13:12</div>
<div class="a" style="left:10.5px;top:202px;width:38px;height:15px;border-radius:8px;background:#7fdc6c"></div>
<div class="a" style="left:28px;top:199px;width:21px;height:21px;border-radius:50%;background:#5db84b;box-shadow:0 1px 3px rgba(0,0,0,.35)"></div>
<div class="t b" style="left:58.2px;top:202.5px;font-size:14.5px;color:#fff;letter-spacing:-0.1px">Доступен</div>
<svg class="i" style="left:211.6px;top:198.7px" width="24" height="24" viewBox="0 0 24 24"><path fill="#fff" d="M12 8c1.1 0 2-.9 2-2s-.9-2-2-2-2 .9-2 2 .9 2 2 2zm0 2c-1.1 0-2 .9-2 2s.9 2 2 2 2-.9 2-2-.9-2-2-2zm0 6c-1.1 0-2 .9-2 2s.9 2 2 2 2-.9 2-2-.9-2-2-2z"/></svg>
<div class="a" style="left:4px;top:240px;width:232px;height:27px;border-radius:6px;background:rgba(255,255,255,.3)"></div>
<div class="t b" style="left:15.2px;top:245.7px;font-size:14.5px;color:#fff;white-space:pre">Всего вызовов в очереди:  0</div>

<div class="t" style="left:6.9px;top:287.1px;font-size:13px;color:#767676">Выбор группы</div>
<div class="t" style="left:6.7px;top:308.9px;font-size:17.5px;color:#1f1f1f">default</div>
<div class="a" style="left:6.7px;top:334px;width:242.3px;height:1px;background:#8a8a8a"></div>
<svg class="i" style="left:227.7px;top:305px" width="24" height="24" viewBox="0 0 24 24"><path fill="#666" d="M7 10l5 5 5-5z"/></svg>
<div class="a" style="left:0;top:357px;width:262px;height:1px;background:#e2e2e2"></div>

<div class="a" style="left:0;top:617.2px;width:262px;height:52px;background:#dcdcdc"></div>
<!-- menu icons -->
<svg class="i" style="left:10.6px;top:368.75px" width="32" height="32" viewBox="0 0 24 24"><path class="g" d="M3 13h8V3H3v10zm0 8h8v-6H3v6zm10 0h8V11h-8v10zm0-18v6h8V3h-8z"/></svg>
<svg class="i" style="left:10.6px;top:420.9px" width="32" height="32" viewBox="0 0 24 24"><path class="g" d="M6.62 10.79c1.44 2.83 3.76 5.14 6.59 6.59l2.2-2.2c.27-.27.67-.36 1.02-.24 1.12.37 2.330.57 3.57.57.55 0 1 .45 1 1V20c0 .55-.45 1-1 1-9.39 0-17-7.61-17-17 0-.55.45-1 1-1h3.5c.55 0 1 .45 1 1 0 1.25.2 2.45.57 3.57.11.35.03.74-.25 1.02l-2.2 2.2z"/></svg>
<svg class="i" style="left:10.6px;top:472.85px" width="32" height="32" viewBox="0 0 24 24"><path class="g" d="M4 6H2v14c0 1.1.9 2 2 2h14v-2H4V6zm16-4H8c-1.1 0-2 .9-2 2v12c0 1.1.9 2 2 2h12c1.1 0 2-.9 2-2V4c0-1.1-.9-2-2-2zm-1 9h-4v4h-2v-4H9V9h4V5h2v4h4v2z"/></svg>
<svg class="a" style="left:5px;top:520px" width="45" height="40" viewBox="5 520 45 40"><g class="g"><circle cx="20" cy="533.9" r="4.1"/><path d="M13,544.7 C13.2,541.6 16.8,540.1 19.6,540.1 C21.4,540.1 23,540.4 24.4,541 V544.7 Z"/><rect x="24.3" y="537.2" width="16.6" height="9.8" rx="0.7"/><rect x="30.6" y="546.8" width="4" height="3"/><rect x="27.2" y="549.5" width="10.8" height="1.5" rx="0.75"/></g></svg>
<svg class="i" style="left:10.6px;top:576.3px" width="32" height="32" viewBox="0 0 24 24"><path class="g" d="M20 0H4v2h16V0zM4 24h16v-2H4v2zM20 4H4c-1.1 0-2 .9-2 2v12c0 1.1.9 2 2 2h16c1.1 0 2-.9 2-2V6c0-1.1-.9-2-2-2zm-8 2.75c1.24 0 2.25 1.01 2.25 2.25s-1.01 2.25-2.25 2.25S9.75 10.24 9.75 9 10.76 6.75 12 6.75zM17 17H7v-1.5c0-1.67 3.33-2.5 5-2.5s5 .83 5 2.5V17z"/></svg>
<svg class="i" style="left:10.5px;top:628px" width="32" height="32" viewBox="0 0 24 24"><path class="g" d="M23 8c0 1.1-.9 2-2 2-.18 0-.35-.02-.51-.07l-3.56 3.55c.05.16.07.34.07.52 0 1.1-.9 2-2 2s-2-.9-2-2c0-.18.02-.36.07-.52l-2.55-2.55c-.16.05-.34.07-.52.07s-.36-.02-.52-.07l-4.55 4.56c.05.16.07.33.07.51 0 1.1-.9 2-2 2s-2-.9-2-2 .9-2 2-2c.18 0 .35.02.51.07l4.56-4.55C8.020 9.36 8 9.18 8 9c0-1.1.9-2 2-2s2 .9 2 2c0 .18-.02.36-.07.52l2.55 2.55c.16-.05.34-.07.52-.07s.36.02.52.07l3.55-3.56C19.02 8.35 19 8.18 19 8c0-1.1.9-2 2-2s2 .9 2 2z"/></svg>
<svg class="i" style="left:10.75px;top:679.5px" width="32.4" height="32.4" viewBox="0 0 24 24"><path class="g" d="M17 3H5c-1.11 0-2 .9-2 2v14c0 1.1.89 2 2 2h14c1.1 0 2-.9 2-2V7l-4-4zm-5 16c-1.66 0-3-1.34-3-3s1.34-3 3-3 3 1.34 3 3-1.34 3-3 3zm3-10H5V5h10v4z"/></svg>
<div class="t m" style="left:52px;top:375.95px;font-size:15.1px">Обзорная панель</div>
<div class="t m" style="left:52px;top:427.55px;font-size:15.1px">Вызовы</div>
<div class="t m" style="left:52px;top:479.35px;font-size:15.1px">Очереди</div>
<div class="t m" style="left:52px;top:531.25px;font-size:15.1px">Операторы</div>
<div class="t m" style="left:52px;top:583.05px;font-size:15.1px">Справочник</div>
<div class="t m" style="left:52px;top:635.05px;font-size:15.1px">Статистика</div>
<div class="t m" style="left:52px;top:686.95px;font-size:15.1px">Отчеты</div>

<div class="a" style="left:0;top:778px;width:262px;height:43px;background:#f0f0f0"></div>
<svg class="i" style="left:10px;top:788px" width="24" height="24" viewBox="0 0 24 24"><path fill="#1f1f1f" d="M12 19c-1.1 0-2 .9-2 2s.9 2 2 2 2-.9 2-2-.9-2-2-2zM6 1c-1.1 0-2 .9-2 2s.9 2 2 2 2-.9 2-2-.9-2-2-2zm0 6c-1.1 0-2 .9-2 2s.9 2 2 2 2-.9 2-2-.9-2-2-2zm0 6c-1.1 0-2 .9-2 2s.9 2 2 2 2-.9 2-2-.9-2-2-2zm12-8c1.1 0 2-.9 2-2s-.9-2-2-2-2 .9-2 2 .9 2 2 2zm-6 8c-1.1 0-2 .9-2 2s.9 2 2 2 2-.9 2-2-.9-2-2-2zm6 0c-1.1 0-2 .9-2 2s.9 2 2 2 2-.9 2-2-.9-2-2-2zm0-6c-1.1 0-2 .9-2 2s.9 2 2 2 2-.9 2-2-.9-2-2-2zm-6 0c-1.1 0-2 .9-2 2s.9 2 2 2 2-.9 2-2-.9-2-2-2zm0-6c-1.1 0-2 .9-2 2s.9 2 2 2 2-.9 2-2-.9-2-2-2z"/></svg>
<div class="t" style="left:44px;top:790.0px;font-size:17px;letter-spacing:0.18px;color:#a0a0a0">Введите номер*</div>
<div class="a" style="left:44px;top:813.5px;width:211px;height:1px;background:#8a8a8a"></div>
<div class="a" style="left:0;top:821px;width:127.5px;height:52.4px;background:#dcdcdc"></div>
<div class="a" style="left:0;top:873px;width:262px;height:1px;background:#e2e2e2"></div>
<div class="a" style="left:0;top:926px;width:262px;height:1px;background:#e2e2e2"></div>
<div class="a" style="left:127px;top:821px;width:1px;height:105px;background:#e2e2e2"></div>
<div class="t" style="left:0;top:839.1px;width:120px;text-align:center;font-size:15px">Сессия</div>
<div class="t" style="left:127.5px;top:839.1px;width:133.5px;text-align:center;font-size:15px">Смена</div>
<div class="t" style="left:0;top:892.4px;width:120.5px;text-align:center;font-size:15px">Неделя</div>
<div class="t" style="left:127.5px;top:892.4px;width:134.5px;text-align:center;font-size:15px">Месяц</div>
<div class="a" style="left:0;top:927px;width:262px;height:24.5px;overflow:hidden">
 <div class="t" style="left:21px;top:15.3px;font-size:15px">Доступен</div>
 <div class="t" style="left:175px;top:15.3px;font-size:15px">00:13:12</div>
</div>
<div class="a" style="left:0;top:951.3px;width:262px;height:1px;background:#e2e2e2"></div>
<div class="t m" style="left:83px;top:966.0px;font-size:13.8px;letter-spacing:0.95px">Открыть чат</div>
<svg class="i" style="left:179.9px;top:961.7px" width="25.3" height="25.3" viewBox="0 0 24 24"><path fill="#1f1f1f" d="M20 2H4c-1.1 0-1.99.9-1.99 2L2 22l4-4h14c1.1 0 2-.9 2-2V4c0-1.1-.9-2-2-2zm0 14H5.17L4 17.17V4h16v12zM6 12h8v2H6zm0-3h12v2H6zm0-3h12v2H6z"/></svg>
<div class="a" style="left:0;top:993px;width:262px;height:1px;background:#e2e2e2"></div>
<svg class="i" style="left:80.5px;top:1002.2px" width="24" height="24" viewBox="0 0 24 24"><path fill="#1f1f1f" d="M15.41 7.41L14 6l-6 6 6 6 1.41-1.41L10.83 12z"/></svg>
<div class="t m" style="left:109.8px;top:1007.0px;font-size:13.8px;letter-spacing:0.65px">Свернуть</div>
<div class="t" style="left:101.5px;top:1035.4px;font-size:11.7px;letter-spacing:0.4px;color:#767676">3.14.14.3</div>
<!--SIDEEND-->
<!--SHADE-->
<div class="a" style="left:0;top:1055.6px;width:1920px;height:1.5px;background:#1c0c16"></div>
<div class="a" style="left:0;top:1006px;width:1920px;height:50px;background:linear-gradient(180deg,rgba(0,0,0,0),rgba(0,0,0,.03) 50%,rgba(0,0,0,.12));border-radius:0 0 0 8px;pointer-events:none"></div>
</body></html>
